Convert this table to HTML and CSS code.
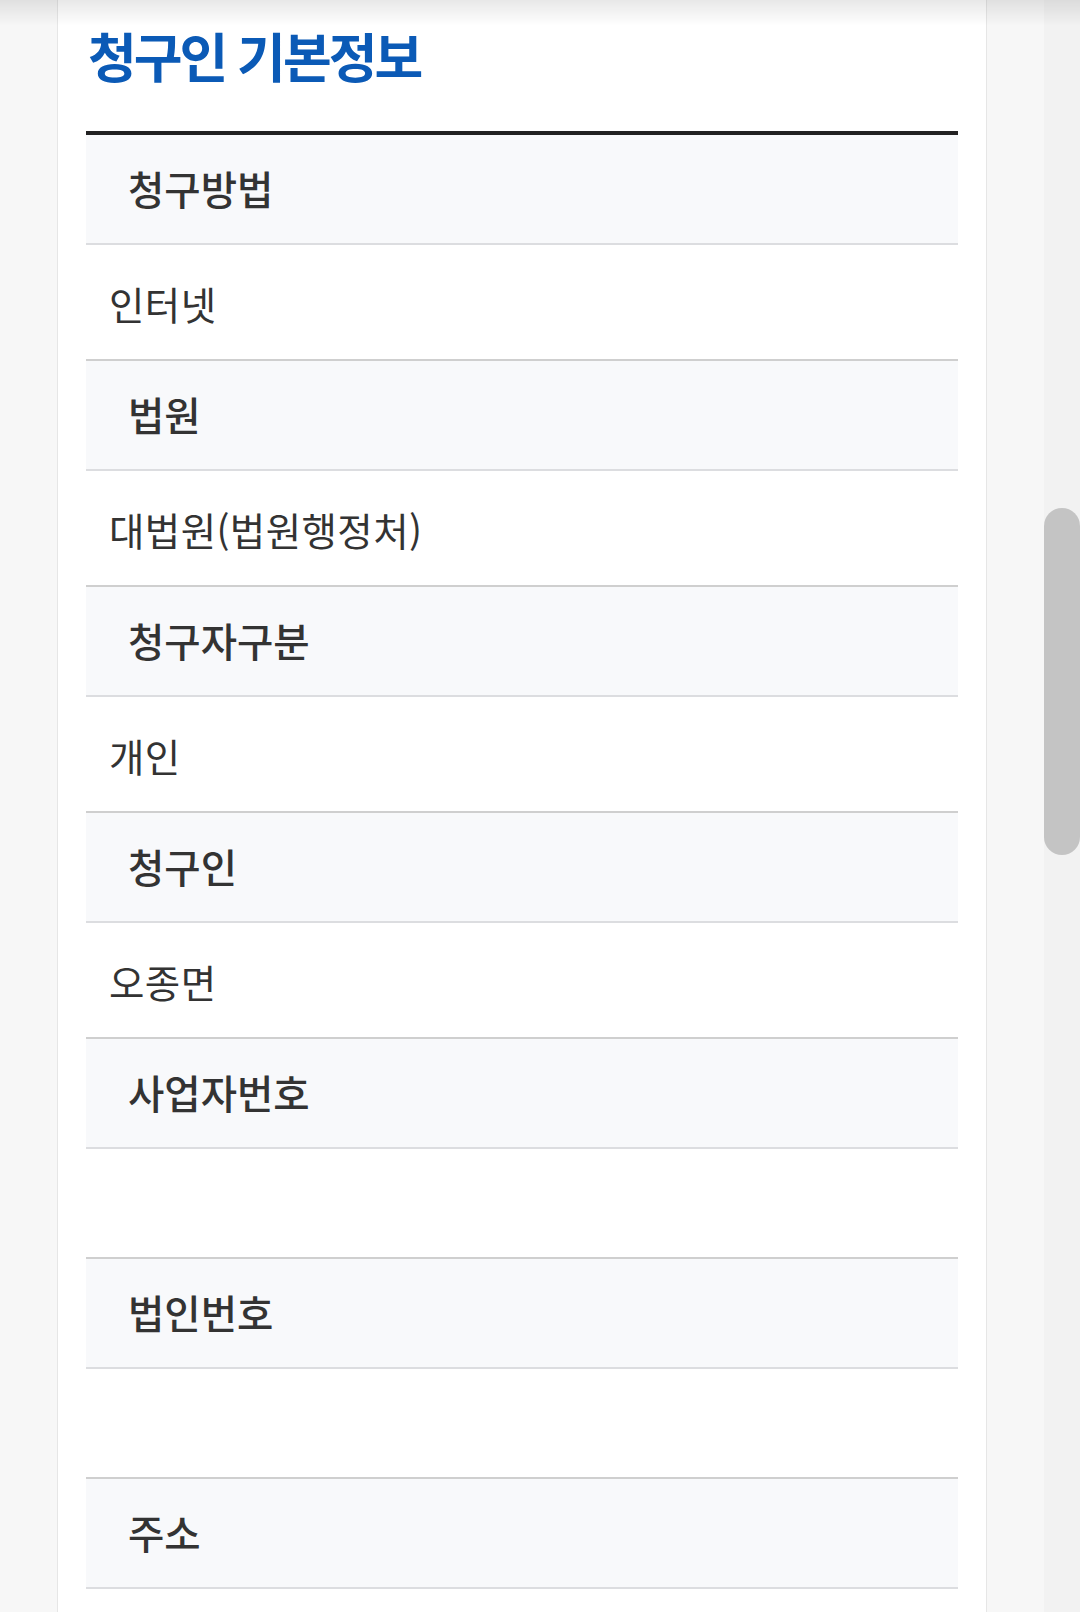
FILE: index.html
```html
<!DOCTYPE html>
<html lang="ko">
<head>
<meta charset="utf-8">
<title>청구인 기본정보</title>
<link rel="stylesheet" href="styles.css">
</head>
<body>
<div class="topshade"></div>
<div class="layout">
  <main class="main">
    <section class="card">
      <h2 class="title">청구인 기본정보</h2>
      <div class="table">
        <div class="th">청구방법</div>
        <div class="td">인터넷</div>
        <div class="th">법원</div>
        <div class="td">대법원(법원행정처)</div>
        <div class="th">청구자구분</div>
        <div class="td">개인</div>
        <div class="th">청구인</div>
        <div class="td">오종면</div>
        <div class="th">사업자번호</div>
        <div class="td"></div>
        <div class="th">법인번호</div>
        <div class="td"></div>
        <div class="th">주소</div>
        <div class="td"></div>
      </div>
    </section>
  </main>
  <aside class="scrolltrack"><div class="thumb"></div></aside>
</div>
</body>
</html>
```
FILE: styles.css
```css
html, body {
  margin: 0;
  padding: 0;
  height: 100%;
  overflow: hidden;
}
body {
  background: #f7f7f7;
  font-family: "Noto Sans CJK KR", "Noto Sans", sans-serif;
  color: #333;
}
.topshade {
  position: fixed;
  left: 0;
  top: 0;
  width: 100%;
  height: 26px;
  background: linear-gradient(to bottom, rgba(0,0,0,0.09), rgba(0,0,0,0));
  z-index: 5;
}
.layout {
  display: flex;
  height: 1612px;
}
.main {
  flex: 1;
  padding-left: 57px;
  padding-right: 57px;
}
.card {
  box-sizing: border-box;
  width: 930px;
  height: 1700px;
  background: #fff;
  border-left: 1px solid #e6e6e6;
  border-right: 1px solid #e6e6e6;
  padding: 0 28px;
}
.title {
  margin: 0;
  padding-top: 20px;
  padding-left: 2px;
  height: 110px;
  box-sizing: border-box;
  font-size: 53px;
  line-height: 70px;
  font-weight: 700;
  letter-spacing: -3px;
  color: #0b5ab6;
}
.table {
  border-top: 4px solid #222;
  margin-top: 21px;
}
.th {
  box-sizing: border-box;
  height: 110px;
  background: #f8f9fb;
  border-bottom: 2px solid #dcdde0;
  display: flex;
  align-items: center;
  padding-left: 42px;
  padding-bottom: 3px;
  font-size: 39.5px;
  font-weight: 500;
  color: #333;
}
.td {
  box-sizing: border-box;
  min-height: 110px;
  border-bottom: 2px solid #cfcfcf;
  padding: 30px 23px 28px;
  font-size: 38.5px;
  line-height: 56px;
  color: #333;
  letter-spacing: 0.4px;
}
.scrolltrack {
  width: 36px;
  background: #f2f2f2;
  padding-top: 508px;
}
.thumb {
  width: 36px;
  height: 347px;
  border-radius: 18px;
  background: #c4c4c4;
}
```
